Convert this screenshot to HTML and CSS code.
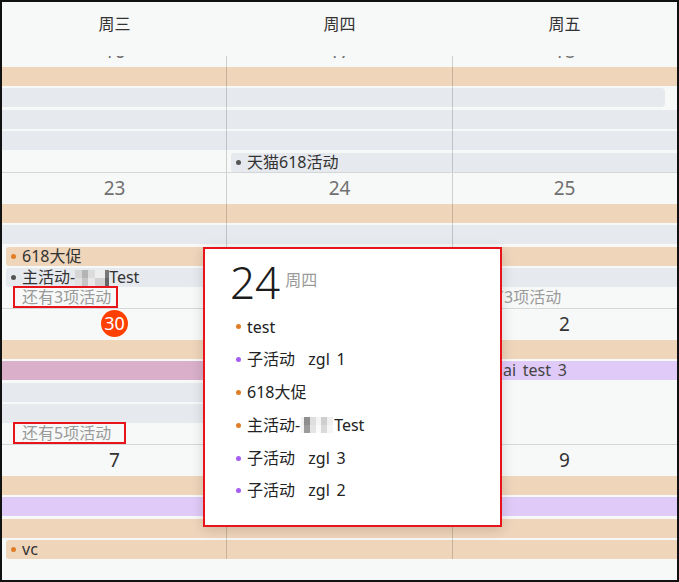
FILE: index.html
```html
<!DOCTYPE html>
<html lang="zh-CN">

<head>
    <meta charset="UTF-8">
    <meta name="viewport" content="width=device-width, initial-scale=1.0">
    <title>活动日历</title>
    <link rel="stylesheet" href="styles.css">
</head>

<body>
    <div class="calendar">

        <div class="head">
            <div class="head-cell">周三</div>
            <div class="head-cell">周四</div>
            <div class="head-cell">周五</div>
        </div>

        <div class="body">
            <!-- 16 - 18 -->
            <div class="week week-first">
                <div class="dates muted">
                    <span>16</span><span>17</span><span>18</span>
                </div>
                <div class="lanes">
                    <div class="lane"><div class="bar orange"></div></div>
                    <div class="lane"><div class="bar gray ends"></div></div>
                    <div class="lane"><div class="bar gray"></div></div>
                    <div class="lane"><div class="bar gray"></div></div>
                    <div class="lane">
                        <div class="bar gray c2-3 start"><i class="dot dot-gray"></i>天猫618活动</div>
                    </div>
                </div>
            </div>

            <!-- 23 - 25 -->
            <div class="week">
                <div class="dates muted">
                    <span>23</span><span>24</span><span>25</span>
                </div>
                <div class="lanes">
                    <div class="lane"><div class="bar orange"></div></div>
                    <div class="lane"><div class="bar gray"></div></div>
                    <div class="lane">
                        <div class="bar orange start"><i class="dot dot-orange"></i>618大促</div>
                    </div>
                    <div class="lane">
                        <div class="bar gray start"><i class="dot dot-gray"></i>主活动-<span class="mosaic"></span>Test</div>
                    </div>
                </div>
                <div class="more">
                    <div class="more-cell"><span class="flag">还有3项活动</span></div>
                    <div class="more-cell"></div>
                    <div class="more-cell">还有3项活动</div>
                </div>
            </div>

            <!-- 30 - 2 -->
            <div class="week">
                <div class="dates">
                    <span><b class="today">30</b></span><span>1</span><span>2</span>
                </div>
                <div class="lanes">
                    <div class="lane"><div class="bar orange"></div></div>
                    <div class="lane">
                        <div class="bar pink c1"></div>
                        <div class="bar violet c2-3"><span class="tail">ai test 3</span></div>
                    </div>
                    <div class="lane"><div class="bar gray c1-2 ends"></div></div>
                    <div class="lane"><div class="bar gray c1-2 ends"></div></div>
                </div>
                <div class="more">
                    <div class="more-cell"><span class="flag flag-wide">还有5项活动</span></div>
                    <div class="more-cell"></div>
                    <div class="more-cell"></div>
                </div>
            </div>

            <!-- 7 - 9 -->
            <div class="week">
                <div class="dates">
                    <span>7</span><span>8</span><span>9</span>
                </div>
                <div class="lanes">
                    <div class="lane"><div class="bar orange"></div></div>
                    <div class="lane"><div class="bar violet"></div></div>
                    <div class="lane"><div class="bar orange"></div></div>
                    <div class="lane">
                        <div class="bar orange start"><i class="dot dot-orange"></i>vc</div>
                    </div>
                </div>
            </div>
        </div>

        <div class="pop">
            <div class="pop-head">
                <span class="pop-day">24</span>
                <span class="pop-week">周四</span>
            </div>
            <ul class="pop-list">
                <li class="pop-item"><i class="dot dot-orange"></i>test</li>
                <li class="pop-item"><i class="dot dot-purple"></i>子活动&nbsp; zgl 1</li>
                <li class="pop-item"><i class="dot dot-orange"></i>618大促</li>
                <li class="pop-item"><i class="dot dot-orange"></i>主活动-<span class="mosaic mosaic-light"></span>Test</li>
                <li class="pop-item"><i class="dot dot-purple"></i>子活动&nbsp; zgl 3</li>
                <li class="pop-item"><i class="dot dot-purple"></i>子活动&nbsp; zgl 2</li>
            </ul>
        </div>

    </div>
</body>

</html>
```

FILE: styles.css
```css
body {
    margin: 0;
}

.calendar {
    width: 679px;
    height: 582px;
    box-sizing: border-box;
    border: 2px solid #111;
    background-color: #f7f9f8;
    position: relative;
    display: flex;
    flex-direction: column;
    overflow: hidden;
    font-family: "Noto Sans", "Noto Sans CJK SC", sans-serif;
    color: #333;
}

/* week day names */
.head {
    display: grid;
    grid-template-columns: repeat(3, 1fr);
    height: 54px;
    flex: none;
    position: relative;
    z-index: 2;
    background-color: #f7f9f8;
}

.head-cell {
    text-align: center;
    font-size: 16px;
    line-height: 20px;
    padding-top: 12px;
}

.body {
    flex: 1;
    overflow: hidden;
}

.week {
    position: relative;
    border-top: 1px solid #d4d6d7;
}

/* first week is scrolled half under the header */
.week-first {
    margin-top: -21.5px;
}

/* column dividers drawn over the bars */
.week::after {
    content: "";
    position: absolute;
    top: 0;
    right: 0;
    bottom: 0;
    left: 0;
    pointer-events: none;
    background: linear-gradient(90deg,
            transparent 224px,
            rgba(0, 0, 0, 0.17) 224px 225px,
            transparent 225px 450px,
            rgba(0, 0, 0, 0.17) 450px 451px,
            transparent 451px);
}

.dates {
    display: grid;
    grid-template-columns: repeat(3, 1fr);
    height: 31px;
    line-height: 31px;
    font-size: 19px;
    text-align: center;
    color: #333;
}

.dates.muted {
    color: #707070;
}

.today {
    display: inline-flex;
    align-items: center;
    justify-content: center;
    width: 27px;
    height: 27px;
    border-radius: 50%;
    background-color: #ff4000;
    color: #fff;
    font-weight: normal;
    font-size: 18px;
    line-height: 27px;
    vertical-align: middle;
    margin-top: -3px;
}

.lanes {
    display: flex;
    flex-direction: column;
    gap: 2.5px;
}

.lane {
    display: grid;
    grid-template-columns: repeat(3, 1fr);
    height: 19px;
}

.bar {
    grid-column: 1 / 4;
    min-width: 0;
    display: flex;
    align-items: center;
    font-size: 16px;
    line-height: 19px;
    color: #333;
    white-space: nowrap;
}

.c1 {
    grid-column: 1 / 2;
}

.c1-2 {
    grid-column: 1 / 3;
}

.c2-3 {
    grid-column: 2 / 4;
}

.orange {
    background-color: #efd5ba;
}

.gray {
    background-color: #e6e9ee;
}

.pink {
    background-color: #d9afc9;
}

.violet {
    background-color: #e0caf7;
}

.start {
    margin-left: 4px;
    padding-left: 5px;
    border-top-left-radius: 3px;
    border-bottom-left-radius: 3px;
}

.ends {
    margin-right: 12px;
    border-top-right-radius: 4px;
    border-bottom-right-radius: 4px;
}

.tail {
    padding-left: 276px;
    color: #444;
    word-spacing: 2.5px;
}

.dot {
    display: inline-block;
    width: 5px;
    height: 5px;
    border-radius: 50%;
    margin-right: 6px;
    flex: none;
}

.dot-orange {
    background-color: #e07d28;
}

.dot-gray {
    background-color: #555;
}

.dot-purple {
    background-color: #a55cf2;
}

/* blurred name */
.mosaic {
    display: inline-block;
    width: 34px;
    height: 16px;
    flex: none;
    background:
        linear-gradient(90deg, #d6d6d6 0 7px, #b4b4b4 7px 13px, #dcdcdc 13px 20px, #eeeeee 20px 30px, #777 30px) top / 100% 50% no-repeat,
        linear-gradient(90deg, #e2e2e2 0 7px, #c6c6c6 7px 13px, #e8e8e8 13px 20px, #d2d2d2 20px 30px, #666 30px) bottom / 100% 50% no-repeat;
}

.mosaic-light {
    width: 32px;
    margin: 0 1px;
    background:
        linear-gradient(90deg, #f2f2f2 0 3px, #8e8e8e 3px 9px, #dedede 9px 15px, #f4f4f4 15px 20px, #cfcfcf 20px 26px, #efefef 26px) top / 100% 50% no-repeat,
        linear-gradient(90deg, #f4f4f4 0 3px, #9c9c9c 3px 9px, #e4e4e4 9px 15px, #fafafa 15px 20px, #dadada 20px 26px, #f6f6f6 26px) bottom / 100% 50% no-repeat;
}

.more {
    display: grid;
    grid-template-columns: repeat(3, 1fr);
    height: 20.5px;
    line-height: 20.5px;
    font-size: 16px;
    color: #9a9a9a;
}

.more-cell {
    padding-left: 20px;
    white-space: nowrap;
}

.flag {
    display: inline-block;
    position: relative;
    z-index: 1;
    line-height: 18px;
    margin-left: -7px;
    padding: 0 5px 0 7px;
    outline: 2px solid #e8141c;
}

.flag-wide {
    padding-right: 13px;
}

/* day popover */
.pop {
    position: absolute;
    left: 201px;
    top: 245px;
    width: 299px;
    height: 280px;
    box-sizing: border-box;
    border: 2px solid #e8141c;
    background-color: #fff;
    box-shadow: 0 3px 12px rgba(0, 0, 0, 0.15);
    padding: 11px 0 0 25px;
    z-index: 3;
}

.pop-head {
    display: flex;
    align-items: flex-start;
}

.pop-day {
    font-size: 44px;
    line-height: 44px;
    font-weight: 300;
    color: #1c1c1c;
}

.pop-week {
    font-size: 16px;
    line-height: 20px;
    color: #9a9a9a;
    margin: 10px 0 0 5px;
}

.pop-list {
    list-style: none;
    margin: 6.5px 0 0;
    padding: 0 0 0 6px;
}

.pop-item {
    display: flex;
    align-items: center;
    height: 32.8px;
    font-size: 16px;
    line-height: 32.8px;
    color: #222;
    white-space: pre;
    word-spacing: 2.5px;
}
```
